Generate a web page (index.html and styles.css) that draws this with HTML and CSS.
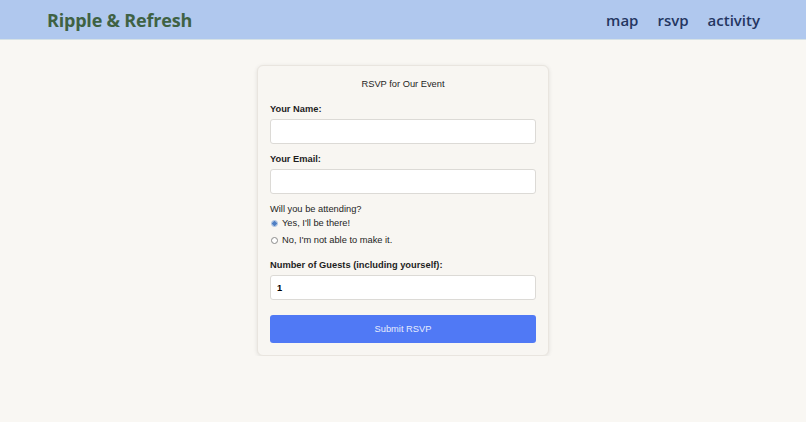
FILE: index.html
```html
<!DOCTYPE html>
<html>
<head>
    <title>Ripple &amp; Refresh: RSVP</title>
    <link rel="stylesheet" href="styles.css">
</head>
<body>
    <div id="header">
        <h1>Ripple &amp; Refresh</h1>
        <div id="links">
            <a href="#">map</a>
            <a href="#">rsvp</a>
            <a href="#">activity</a>
        </div>
    </div>
    <div id="main-content">
        <form id="rsvp-form" class="card">
            <h2>RSVP for Our Event</h2>
            <label class="field-label" for="name">Your Name:</label>
            <input type="text" id="name" class="field">
            <label class="field-label" for="email">Your Email:</label>
            <input type="email" id="email" class="field">
            <p class="question">Will you be attending?</p>
            <label class="choice"><input type="radio" name="attending" value="yes" checked> Yes, I'll be there!</label>
            <label class="choice"><input type="radio" name="attending" value="no"> No, I'm not able to make it.</label>
            <label class="field-label guests-label" for="guests">Number of Guests (including yourself):</label>
            <input type="number" id="guests" class="field" value="1" min="1">
            <button type="button" id="submit-btn">Submit RSVP</button>
        </form>
    </div>
</body>
</html>
```

FILE: styles.css
```css
body {
    margin: 0;
    font-family: "Liberation Sans", Arial, sans-serif;
    background-color: #f9f7f3;
    color: #1e1e1e;
}
#header {
    display: flex;
    justify-content: space-between;
    align-items: center;
    height: 39px;
    padding: 0 46px 0 47px;
    background-color: #b0c8ee;
    border-bottom: 1px solid #d6e2e6;
}
#header h1 {
    margin: 0;
    font-family: "Open Sans", sans-serif;
    font-weight: 700;
    font-size: 18px;
    letter-spacing: -0.2px;
    color: #3f6244;
}
#header #links {
    display: flex;
    gap: 19px;
}
#header a {
    font-family: "Open Sans", sans-serif;
    font-weight: 600;
    font-size: 15px;
    color: #243661;
    text-decoration: none;
}
#main-content {
    display: flex;
    justify-content: center;
    padding-top: 25px;
}
.card {
    box-sizing: border-box;
    width: 292px;
    padding: 13px 12px 12px;
    display: flex;
    flex-direction: column;
    background-color: #f8f6f2;
    border: 1px solid #e9e5df;
    border-radius: 6px;
    box-shadow: 0 1px 4px rgba(0, 0, 0, 0.1);
    font-size: 9.3px;
    line-height: 11px;
}
.card h2 {
    margin: 0 0 14px;
    font-size: 9.3px;
    font-weight: normal;
    text-align: center;
}
.field-label {
    font-weight: bold;
    margin-bottom: 4px;
}
.field {
    box-sizing: border-box;
    height: 25px;
    margin-bottom: 10px;
    padding: 0 6px;
    background-color: #fff;
    border: 1px solid #dcdad6;
    border-radius: 3px;
    font-family: inherit;
    font-size: 9.3px;
    font-weight: bold;
}
.question {
    margin: 0;
}
.choice {
    display: flex;
    align-items: center;
    gap: 4px;
    height: 17px;
}
.choice input {
    appearance: none;
    width: 7px;
    height: 7px;
    margin: 0 0 0 1px;
    border: 1px solid #8a8a8a;
    border-radius: 50%;
    background-color: #fff;
}
.choice input:checked {
    border-color: #9fb9dc;
    background: radial-gradient(circle, #4f7fc4 0 2px, #cfdcf0 2.5px);
}
.guests-label {
    margin-top: 11px;
}
#submit-btn {
    height: 28px;
    margin-top: 5px;
    background-color: #5079f5;
    color: #e6ecfd;
    border: none;
    border-radius: 3px;
    font-family: inherit;
    font-size: 9.3px;
    cursor: pointer;
}
```
